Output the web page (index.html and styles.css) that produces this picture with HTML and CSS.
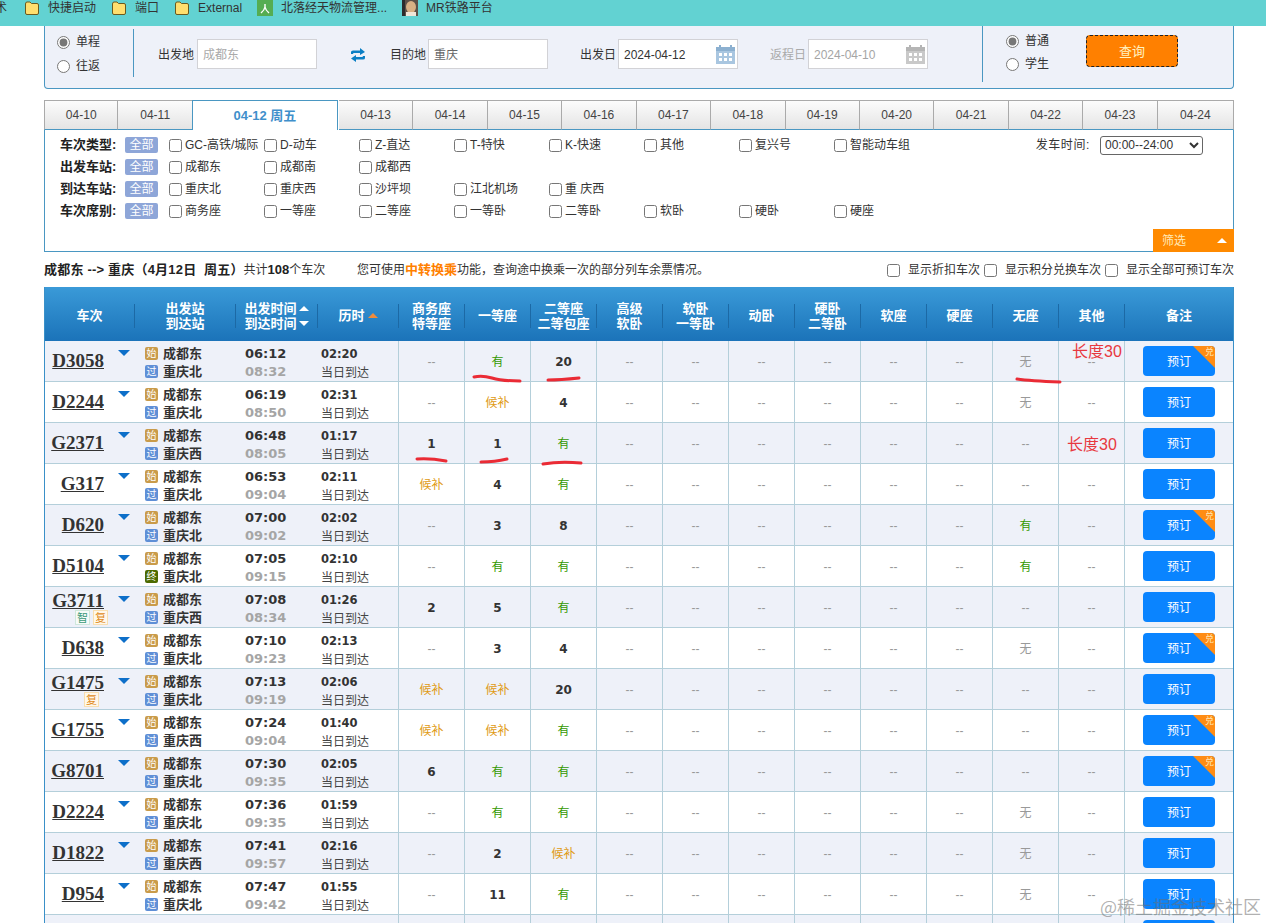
FILE: index.html
```html
<!DOCTYPE html>
<html lang="zh-CN">
<head>
<meta charset="utf-8">
<title>车票查询</title>
<link rel="stylesheet" href="styles.css">
</head>
<body>
<nav class="bookmarks">
  <span class="cut">术</span>
  <span class="bm"><svg class="ic" viewBox="0 0 16 16"><path d="M1.5 4 Q1.5 2 3 2 H6 L7.5 3.5 H13 Q14.5 3.5 14.5 5 V13 Q14.5 14.5 13 14.5 H3 Q1.5 14.5 1.5 13 Z" fill="#ffdf6e" stroke="#6b5a1e"/></svg>快捷启动</span>
  <span class="bm"><svg class="ic" viewBox="0 0 16 16"><path d="M1.5 4 Q1.5 2 3 2 H6 L7.5 3.5 H13 Q14.5 3.5 14.5 5 V13 Q14.5 14.5 13 14.5 H3 Q1.5 14.5 1.5 13 Z" fill="#ffdf6e" stroke="#6b5a1e"/></svg>端口</span>
  <span class="bm"><svg class="ic" viewBox="0 0 16 16"><path d="M1.5 4 Q1.5 2 3 2 H6 L7.5 3.5 H13 Q14.5 3.5 14.5 5 V13 Q14.5 14.5 13 14.5 H3 Q1.5 14.5 1.5 13 Z" fill="#ffdf6e" stroke="#6b5a1e"/></svg>External</span>
  <span class="bm"><svg class="ic" viewBox="0 0 16 16"><rect width="16" height="16" fill="#55ad52"/><path d="M8 4 V7 Q7.5 10 4 13 M8 7 Q8.5 10 12 13" fill="none" stroke="#fff" stroke-width="1.4"/></svg>北落经天物流管理...</span>
  <span class="bm"><svg class="ic" viewBox="0 0 16 16"><rect width="16" height="16" fill="#5d5148"/><ellipse cx="9" cy="7" rx="5" ry="6" fill="#d9b184"/><rect x="0" y="0" width="3" height="16" fill="#2c2c2c"/><rect x="4" y="12" width="10" height="4" fill="#f0e6d8"/></svg>MR铁路平台</span>
</nav>

<main class="page">
  <section class="query">
    <div class="trip">
      <label class="opt"><input type="radio" name="trip" checked>单程</label>
      <label class="opt"><input type="radio" name="trip">往返</label>
    </div>
    <div class="field first"><span>出发地</span><div class="box muted">成都东</div></div>
    <svg class="swap" viewBox="0 0 16 14"><path d="M1 6 V4 Q1 2.5 3 2.5 H10 V0 L15 4 L10 7 V5 H3.5 L3 6 Z M15 8 V10 Q15 11.5 13 11.5 H6 V14 L1 10.5 L6 7 V9 H12.5 L13 8 Z" fill="#0b7fc4"/></svg>
    <div class="field"><span>目的地</span><div class="box">重庆</div></div>
    <div class="field wide"><span>出发日</span><div class="box date">2024-04-12
      <svg class="cal" viewBox="0 0 21 21"><rect x="1" y="3" width="19" height="17" fill="#a9c6e0"/><rect x="1" y="3" width="19" height="4" fill="#8cb0d0"/><rect x="4" y="1" width="2" height="4" fill="#8cb0d0"/><rect x="15" y="1" width="2" height="4" fill="#8cb0d0"/><path d="M4 9 h3 v3 h-3 z M9 9 h3 v3 h-3 z M14 9 h3 v3 h-3 z M4 14 h3 v3 h-3 z M9 14 h3 v3 h-3 z M14 14 h3 v3 h-3 z" fill="#fff"/></svg></div></div>
    <div class="field wide off"><span>返程日</span><div class="box date muted2">2024-04-10
      <svg class="cal" viewBox="0 0 21 21"><rect x="1" y="3" width="19" height="17" fill="#c9c9c9"/><rect x="1" y="3" width="19" height="4" fill="#b5b5b5"/><rect x="4" y="1" width="2" height="4" fill="#b5b5b5"/><rect x="15" y="1" width="2" height="4" fill="#b5b5b5"/><path d="M4 9 h3 v3 h-3 z M9 9 h3 v3 h-3 z M14 9 h3 v3 h-3 z M4 14 h3 v3 h-3 z M9 14 h3 v3 h-3 z M14 14 h3 v3 h-3 z" fill="#fff"/></svg></div></div>
    <div class="vline"></div>
    <div class="kind">
      <label class="opt"><input type="radio" name="kind" checked>普通</label>
      <label class="opt"><input type="radio" name="kind">学生</label>
    </div>
    <button class="search" type="button">查询</button>
  </section>

  <div class="tabs">
    <span class="tab">04-10</span><span class="tab">04-11</span><span class="tab on">04-12 周五</span><span class="tab">04-13</span><span class="tab">04-14</span><span class="tab">04-15</span><span class="tab">04-16</span><span class="tab">04-17</span><span class="tab">04-18</span><span class="tab">04-19</span><span class="tab">04-20</span><span class="tab">04-21</span><span class="tab">04-22</span><span class="tab">04-23</span><span class="tab">04-24</span>
  </div>

  <section class="filter">
    <div class="frow">
      <b class="flabel">车次类型:</b><span class="all">全部</span>
      <div class="checks">
        <label><input type="checkbox">GC-高铁/城际</label><label><input type="checkbox">D-动车</label><label><input type="checkbox">Z-直达</label><label><input type="checkbox">T-特快</label><label><input type="checkbox">K-快速</label><label><input type="checkbox">其他</label><label><input type="checkbox">复兴号</label><label><input type="checkbox">智能动车组</label>
      </div>
      <div class="depart"><span>发车时间:</span><select class="sel"><option>00:00--24:00</option></select></div>
    </div>
    <div class="frow">
      <b class="flabel">出发车站:</b><span class="all">全部</span>
      <div class="checks"><label><input type="checkbox">成都东</label><label><input type="checkbox">成都南</label><label><input type="checkbox">成都西</label></div>
    </div>
    <div class="frow">
      <b class="flabel">到达车站:</b><span class="all">全部</span>
      <div class="checks"><label><input type="checkbox">重庆北</label><label><input type="checkbox">重庆西</label><label><input type="checkbox">沙坪坝</label><label><input type="checkbox">江北机场</label><label><input type="checkbox">重 庆西</label></div>
    </div>
    <div class="frow">
      <b class="flabel">车次席别:</b><span class="all">全部</span>
      <div class="checks"><label><input type="checkbox">商务座</label><label><input type="checkbox">一等座</label><label><input type="checkbox">二等座</label><label><input type="checkbox">一等卧</label><label><input type="checkbox">二等卧</label><label><input type="checkbox">软卧</label><label><input type="checkbox">硬卧</label><label><input type="checkbox">硬座</label></div>
    </div>
    <div class="fbtn"><span>筛选</span><i class="tri"></i></div>
  </section>

  <div class="summary">
    <div class="sleft"><b class="route">成都东 --&gt; 重庆（4月12日&nbsp; 周五）</b>共计<b>108</b>个车次</div>
    <div class="tip">您可使用<b class="tr">中转换乘</b>功能，查询途中换乘一次的部分列车余票情况。</div>
    <div class="sright">
      <label><input type="checkbox">显示折扣车次</label>
      <label><input type="checkbox">显示积分兑换车次</label>
      <label><input type="checkbox">显示全部可预订车次</label>
    </div>
  </div>

  <div class="tablewrap">
  <table class="trains">
    <colgroup><col class="c0"><col class="c1"><col class="c2"><col class="c3"><col class="cs"><col class="cs"><col class="cs"><col class="cs"><col class="cs"><col class="cs"><col class="cs"><col class="cs"><col class="cs"><col class="cs"><col class="cs"><col class="c9"></colgroup>
    <thead><tr>
      <th><div class="hc">车次</div></th>
      <th><div class="hc">出发站<br>到达站</div></th>
      <th><div class="hc"><div><div class="hl">出发时间<i class="up"></i></div><div class="hl">到达时间<i class="dn"></i></div></div></div></th>
      <th><div class="hc">历时<i class="up or"></i></div></th>
      <th><div class="hc">商务座<br>特等座</div></th>
      <th><div class="hc">一等座</div></th>
      <th><div class="hc">二等座<br>二等包座</div></th>
      <th><div class="hc">高级<br>软卧</div></th>
      <th><div class="hc">软卧<br>一等卧</div></th>
      <th><div class="hc">动卧</div></th>
      <th><div class="hc">硬卧<br>二等卧</div></th>
      <th><div class="hc">软座</div></th>
      <th><div class="hc">硬座</div></th>
      <th><div class="hc">无座</div></th>
      <th><div class="hc">其他</div></th>
      <th><div class="hc">备注</div></th>
    </tr></thead>
    <tbody>
      <tr><td class="t"><div class="tn"><div class="cd"><a>D3058</a></div><i class="ar"></i></div></td><td class="s"><div class="ln"><i class="st">始</i>成都东</div><div class="ln"><i class="gu">过</i>重庆北</div></td><td class="tm"><div>06:12</div><div class="ga">08:32</div></td><td class="du"><div>02:20</div><div class="dd">当日到达</div></td><td>--</td><td class="y">有</td><td class="n">20</td><td>--</td><td>--</td><td>--</td><td>--</td><td>--</td><td>--</td><td>无</td><td>--</td><td><a class="bk">预订<i class="dui">兑</i></a></td></tr>
      <tr><td class="t"><div class="tn"><div class="cd"><a>D2244</a></div><i class="ar"></i></div></td><td class="s"><div class="ln"><i class="st">始</i>成都东</div><div class="ln"><i class="gu">过</i>重庆北</div></td><td class="tm"><div>06:19</div><div class="ga">08:50</div></td><td class="du"><div>02:31</div><div class="dd">当日到达</div></td><td>--</td><td class="h">候补</td><td class="n">4</td><td>--</td><td>--</td><td>--</td><td>--</td><td>--</td><td>--</td><td>无</td><td>--</td><td><a class="bk">预订</a></td></tr>
      <tr><td class="t"><div class="tn"><div class="cd"><a>G2371</a></div><i class="ar"></i></div></td><td class="s"><div class="ln"><i class="st">始</i>成都东</div><div class="ln"><i class="gu">过</i>重庆西</div></td><td class="tm"><div>06:48</div><div class="ga">08:05</div></td><td class="du"><div>01:17</div><div class="dd">当日到达</div></td><td class="n">1</td><td class="n">1</td><td class="y">有</td><td>--</td><td>--</td><td>--</td><td>--</td><td>--</td><td>--</td><td>--</td><td>--</td><td><a class="bk">预订</a></td></tr>
      <tr><td class="t"><div class="tn"><div class="cd"><a>G317</a></div><i class="ar"></i></div></td><td class="s"><div class="ln"><i class="st">始</i>成都东</div><div class="ln"><i class="gu">过</i>重庆北</div></td><td class="tm"><div>06:53</div><div class="ga">09:04</div></td><td class="du"><div>02:11</div><div class="dd">当日到达</div></td><td class="h">候补</td><td class="n">4</td><td class="y">有</td><td>--</td><td>--</td><td>--</td><td>--</td><td>--</td><td>--</td><td>--</td><td>--</td><td><a class="bk">预订</a></td></tr>
      <tr><td class="t"><div class="tn"><div class="cd"><a>D620</a></div><i class="ar"></i></div></td><td class="s"><div class="ln"><i class="st">始</i>成都东</div><div class="ln"><i class="gu">过</i>重庆北</div></td><td class="tm"><div>07:00</div><div class="ga">09:02</div></td><td class="du"><div>02:02</div><div class="dd">当日到达</div></td><td>--</td><td class="n">3</td><td class="n">8</td><td>--</td><td>--</td><td>--</td><td>--</td><td>--</td><td>--</td><td class="y">有</td><td>--</td><td><a class="bk">预订<i class="dui">兑</i></a></td></tr>
      <tr><td class="t"><div class="tn"><div class="cd"><a>D5104</a></div><i class="ar"></i></div></td><td class="s"><div class="ln"><i class="st">始</i>成都东</div><div class="ln"><i class="zh">终</i>重庆北</div></td><td class="tm"><div>07:05</div><div class="ga">09:15</div></td><td class="du"><div>02:10</div><div class="dd">当日到达</div></td><td>--</td><td class="y">有</td><td class="y">有</td><td>--</td><td>--</td><td>--</td><td>--</td><td>--</td><td>--</td><td class="y">有</td><td>--</td><td><a class="bk">预订</a></td></tr>
      <tr><td class="t"><div class="tn"><div class="cd"><a>G3711</a><div class="marks"><i class="zhi">智</i><i class="fu">复</i></div></div><i class="ar"></i></div></td><td class="s"><div class="ln"><i class="st">始</i>成都东</div><div class="ln"><i class="gu">过</i>重庆西</div></td><td class="tm"><div>07:08</div><div class="ga">08:34</div></td><td class="du"><div>01:26</div><div class="dd">当日到达</div></td><td class="n">2</td><td class="n">5</td><td class="y">有</td><td>--</td><td>--</td><td>--</td><td>--</td><td>--</td><td>--</td><td>--</td><td>--</td><td><a class="bk">预订</a></td></tr>
      <tr><td class="t"><div class="tn"><div class="cd"><a>D638</a></div><i class="ar"></i></div></td><td class="s"><div class="ln"><i class="st">始</i>成都东</div><div class="ln"><i class="gu">过</i>重庆北</div></td><td class="tm"><div>07:10</div><div class="ga">09:23</div></td><td class="du"><div>02:13</div><div class="dd">当日到达</div></td><td>--</td><td class="n">3</td><td class="n">4</td><td>--</td><td>--</td><td>--</td><td>--</td><td>--</td><td>--</td><td>无</td><td>--</td><td><a class="bk">预订<i class="dui">兑</i></a></td></tr>
      <tr><td class="t"><div class="tn"><div class="cd"><a>G1475</a><div class="marks"><i class="fu">复</i></div></div><i class="ar"></i></div></td><td class="s"><div class="ln"><i class="st">始</i>成都东</div><div class="ln"><i class="gu">过</i>重庆北</div></td><td class="tm"><div>07:13</div><div class="ga">09:19</div></td><td class="du"><div>02:06</div><div class="dd">当日到达</div></td><td class="h">候补</td><td class="h">候补</td><td class="n">20</td><td>--</td><td>--</td><td>--</td><td>--</td><td>--</td><td>--</td><td>--</td><td>--</td><td><a class="bk">预订</a></td></tr>
      <tr><td class="t"><div class="tn"><div class="cd"><a>G1755</a></div><i class="ar"></i></div></td><td class="s"><div class="ln"><i class="st">始</i>成都东</div><div class="ln"><i class="gu">过</i>重庆西</div></td><td class="tm"><div>07:24</div><div class="ga">09:04</div></td><td class="du"><div>01:40</div><div class="dd">当日到达</div></td><td class="h">候补</td><td class="h">候补</td><td class="y">有</td><td>--</td><td>--</td><td>--</td><td>--</td><td>--</td><td>--</td><td>--</td><td>--</td><td><a class="bk">预订<i class="dui">兑</i></a></td></tr>
      <tr><td class="t"><div class="tn"><div class="cd"><a>G8701</a></div><i class="ar"></i></div></td><td class="s"><div class="ln"><i class="st">始</i>成都东</div><div class="ln"><i class="gu">过</i>重庆北</div></td><td class="tm"><div>07:30</div><div class="ga">09:35</div></td><td class="du"><div>02:05</div><div class="dd">当日到达</div></td><td class="n">6</td><td class="y">有</td><td class="y">有</td><td>--</td><td>--</td><td>--</td><td>--</td><td>--</td><td>--</td><td>--</td><td>--</td><td><a class="bk">预订<i class="dui">兑</i></a></td></tr>
      <tr><td class="t"><div class="tn"><div class="cd"><a>D2224</a></div><i class="ar"></i></div></td><td class="s"><div class="ln"><i class="st">始</i>成都东</div><div class="ln"><i class="gu">过</i>重庆北</div></td><td class="tm"><div>07:36</div><div class="ga">09:35</div></td><td class="du"><div>01:59</div><div class="dd">当日到达</div></td><td>--</td><td class="y">有</td><td class="y">有</td><td>--</td><td>--</td><td>--</td><td>--</td><td>--</td><td>--</td><td>无</td><td>--</td><td><a class="bk">预订</a></td></tr>
      <tr><td class="t"><div class="tn"><div class="cd"><a>D1822</a></div><i class="ar"></i></div></td><td class="s"><div class="ln"><i class="st">始</i>成都东</div><div class="ln"><i class="gu">过</i>重庆西</div></td><td class="tm"><div>07:41</div><div class="ga">09:57</div></td><td class="du"><div>02:16</div><div class="dd">当日到达</div></td><td>--</td><td class="n">2</td><td class="h">候补</td><td>--</td><td>--</td><td>--</td><td>--</td><td>--</td><td>--</td><td>无</td><td>--</td><td><a class="bk">预订</a></td></tr>
      <tr><td class="t"><div class="tn"><div class="cd"><a>D954</a></div><i class="ar"></i></div></td><td class="s"><div class="ln"><i class="st">始</i>成都东</div><div class="ln"><i class="gu">过</i>重庆北</div></td><td class="tm"><div>07:47</div><div class="ga">09:42</div></td><td class="du"><div>01:55</div><div class="dd">当日到达</div></td><td>--</td><td class="n">11</td><td class="y">有</td><td>--</td><td>--</td><td>--</td><td>--</td><td>--</td><td>--</td><td>无</td><td>--</td><td><a class="bk">预订</a></td></tr>
      <tr><td class="t"></td><td class="s"><div class="ln"><i class="st">始</i>成都东</div></td><td class="tm"><div>07:52</div></td><td class="du"><div>02:11</div></td><td></td><td></td><td></td><td></td><td></td><td></td><td></td><td></td><td></td><td></td><td></td><td><a class="bk"></a></td></tr>
    </tbody>
  </table>
  </div>
</main>

<svg class="marksvg" viewBox="0 0 1266 923" aria-hidden="true">
  <g fill="none" stroke="#ea2b35" stroke-width="3" stroke-linecap="round">
    <path d="M474 377 Q482 375 492 378 T520 381"/>
    <path d="M548 380 Q560 380 579 378"/>
    <path d="M1017 379 Q1030 381 1060 382"/>
    <path d="M417 459 Q430 458 446 461"/>
    <path d="M481 462 Q495 462 507 459"/>
    <path d="M543 464 Q560 461 581 463"/>
  </g>
</svg>
<span class="note n1">长度30</span>
<span class="note n2">长度30</span>
<span class="wm">@稀土掘金技术社区</span>
</body>
</html>
```
FILE: styles.css
```css
* { box-sizing: border-box; }
html, body { margin: 0; padding: 0; height: 923px; overflow: hidden; background: #fff; }
body { position: relative; font: 12px/16px "Liberation Sans", "Noto Sans CJK SC", sans-serif; color: #333; }
i { font-style: normal; }
input { margin: 0; width: 13px; height: 13px; accent-color: #777; flex: none; }

.bookmarks { height: 26px; background: #62d2d2; display: flex; gap: 15px; color: #333; white-space: nowrap; overflow: hidden; }
.cut { margin-left: -5px; margin-right: 2px; }
.bm { display: flex; gap: 8px; align-items: flex-start; }
.ic { width: 16px; height: 16px; flex: none; }

.page { width: 1190px; margin-left: 44px; }

.query { height: 63px; background: #eef1f9; border: 1px solid #4a97c2; border-top: 0; border-radius: 0 0 4px 4px; display: flex; align-items: flex-start; padding-left: 12px; }
.trip { width: 77px; height: 48px; margin-top: 3px; padding-top: 5px; border-right: 1px solid #4a97c2; display: flex; flex-direction: column; gap: 8px; }
.opt { display: flex; align-items: center; gap: 6px; height: 16px; }
.field { display: flex; align-items: center; gap: 2px; margin: 13px 0 0 24px; }
.field.first { gap: 3px; }
.field.wide { margin-left: 32px; }
.field.off span { color: #aaa; }
.field > span { width: 36px; padding-top: 2px; white-space: nowrap; }
.box { width: 120px; height: 30px; background: #fff; border: 1px solid #d2d2d6; padding: 2px 0 0 5px; line-height: 26px; color: #666; display: flex; align-items: center; justify-content: space-between; }
.muted { color: #aaa; }
.date { color: #333; padding-right: 1px; }
.date.muted2 { color: #a5a5a5; }
.cal { width: 21px; height: 21px; margin-top: -2px; }
.swap { width: 16px; height: 14px; margin: 22px 0 0 33px; }
.vline { width: 1px; height: 56px; background: #4a97c2; margin-left: 54px; }
.kind { width: 81px; margin: 7px 0 0 23px; display: flex; flex-direction: column; gap: 7px; }
.search { width: 92px; height: 32px; margin: 9px 0 0 -1px; background: #ff8000; color: #fff2c0; font: inherit; font-size: 13px; border: 1px dashed #222; border-radius: 4px; padding: 1px 0 0; }

.tabs { display: flex; margin-top: 11px; height: 30px; }
.tab { flex: 0 0 74.45px; display: flex; align-items: center; justify-content: center; border: 1px solid #aaa; border-left: 0; border-bottom: 1px solid #4a97c2; background: linear-gradient(#fcfcfc, #e4e4e4); color: #444; }
.tab:first-child { border-left: 1px solid #aaa; }
.tab:last-child { flex: 1; }
.tab.on { flex: 0 0 146px; margin-left: -1px; margin-right: 1px; background: #fff; color: #3f8fcb; font-weight: bold; font-size: 13px; border: 1px solid #4a97c2; border-bottom: 0; }

.filter { height: 122px; border: 1px solid #4a97c2; border-top: 0; display: flex; flex-direction: column; padding-top: 4px; }
.frow { display: flex; align-items: center; height: 22px; padding-left: 15px; }
.flabel { width: 65px; font-size: 13px; color: #222; white-space: nowrap; }
.all { width: 33px; height: 16px; background: #8ea6d8; color: #fff; text-align: center; line-height: 16px; border-radius: 2px; margin-right: 11px; }
.checks { display: flex; }
.checks label { width: 95px; display: flex; align-items: center; gap: 3px; white-space: nowrap; }
.depart { margin-left: auto; margin-right: 30px; display: flex; align-items: center; gap: 10px; }
.depart span { white-space: nowrap; letter-spacing: .6px; }
.sel { width: 103px; height: 19px; font: 12px "Liberation Sans", sans-serif; padding: 0; background: #fff; border: 1px solid #666; border-radius: 3px; color: #333; }
.fbtn { margin: auto -1px -1px 0; align-self: flex-end; width: 81px; height: 23px; background: #ff8a00; color: #ffe9b8; display: flex; align-items: center; justify-content: space-between; padding: 0 7px 0 9px; }
.tri { width: 0; height: 0; border: 5px solid transparent; border-top: 0; border-bottom: 5px solid #fff; }

.summary { height: 35px; padding-top: 1px; display: flex; align-items: center; white-space: nowrap; }
.summary b { font-size: 13px; color: #222; }
.summary b.route { letter-spacing: .2px; }
.sleft { width: 313px; }
.summary b.tr { color: #ff8000; }
.sright { margin-left: auto; display: flex; gap: 4px; }
.sright label { display: flex; align-items: center; gap: 8px; }

.tablewrap { border: 1px solid #3a90c8; border-width: 0 1px; }
.trains { width: 1188px; table-layout: fixed; border-collapse: separate; border-spacing: 0; text-align: center; }
.c0 { width: 89px; } .c1 { width: 101px; } .c2 { width: 82px; } .c3 { width: 81px; } .cs { width: 66px; } .c9 { width: 109px; }
.trains thead tr { height: 54px; }
.trains th { padding: 3px 0 0; color: #fff; font-size: 13px; line-height: 15px; font-weight: bold; background: linear-gradient(#3a9ad8, #1b73b9); }
.hc { height: 24px; display: flex; align-items: center; justify-content: center; border-left: 1px solid #1c69a5; gap: 2px; white-space: nowrap; }
.trains th:first-child .hc { border-left: 0; }
.hl { display: flex; align-items: center; gap: 2px; }
.up, .dn { width: 0; height: 0; border: 5px solid transparent; }
.up { border-top: 0; border-bottom: 5px solid #fff; }
.dn { border-bottom: 0; border-top: 5px solid #fff; }
.up.or { border-bottom-color: #f08c3c; margin-left: 1px; }

.trains tbody tr { height: 41px; }
.trains tbody tr:nth-child(odd) { background: #eef1f9; }
.trains td { padding: 0; border-bottom: 1px solid #b4cfda; color: #999; overflow: visible; }
.trains td:nth-child(n+5) { border-left: 1px solid #b4cfda; }
.trains td:nth-child(n+5):not(:last-child) { padding-top: 2px; }
.trains td.n { font: bold 12px "DejaVu Sans", sans-serif; color: #333; }
.trains td.y { color: #339900; }
.trains td.h { color: #e09a12; }
.tn { display: flex; height: 40px; }
.cd { width: 59px; text-align: right; font: bold 19px/22px "Liberation Serif", serif; color: #333; align-self: center; white-space: nowrap; }
.cd a { text-decoration: underline; }
.ar { width: 0; height: 0; border: 6px solid transparent; border-top: 6px solid #0d6fc9; border-bottom: 0; margin: 9px 0 0 14px; }
.marks { display: flex; justify-content: center; gap: 3px; width: 33px; margin: -2px 0 0 30px; font: 11px/13px "Noto Sans CJK SC", sans-serif; }
.marks i { width: 15px; height: 15px; text-align: center; }
.zhi { color: #3a9a78; background: #f6fbf8; border: 1px solid #cfe8dc; }
.fu { color: #e08a1a; background: #fff8ea; border: 1px solid #f9dfb0; }

.trains td.s, .trains td.tm, .trains td.du { text-align: left; padding-top: 3px; }
.trains td.s { padding-left: 11px; font-weight: bold; font-size: 13px; }
.ln { display: flex; align-items: center; gap: 5px; height: 18px; color: #333; }
.ln i { width: 13px; height: 13px; font-size: 10px; line-height: 13px; text-align: center; color: #fff; font-weight: normal; border-radius: 2px; flex: none; }
.st { background: #c99b4a; }
.gu { background: #5f8fd6; }
.ln .zh { background: #4c6a00; }
.trains td.tm { padding-left: 10px; font: bold 13px/18px "DejaVu Sans", sans-serif; color: #333; }
.ga { color: #a5a5a5; }
.trains td.du { padding-left: 4px; font: bold 11.5px/18px "DejaVu Sans", sans-serif; color: #333; }
.dd { font: 12px/18px "Noto Sans CJK SC", sans-serif; color: #444; }
.bk { position: relative; display: block; width: 72px; height: 30px; margin: 0 auto; background: #0a84ff; color: #fff; line-height: 33px; border-radius: 4px; overflow: hidden; }
.dui { position: absolute; top: 0; right: 0; width: 22px; height: 22px; background: #ff8c14; clip-path: polygon(0 0, 100% 0, 100% 100%); color: #ffe9b8; font-size: 9px; line-height: 13px; text-align: right; padding-right: 1px; }

.marksvg { position: absolute; left: 0; top: 0; width: 1266px; height: 923px; pointer-events: none; }
.note { position: absolute; color: #e8383f; font-size: 16px; line-height: 20px; white-space: nowrap; }
.n1 { left: 1072px; top: 342px; }
.n2 { left: 1067px; top: 435px; }
.wm { position: absolute; left: 1100px; top: 896px; color: rgba(110, 110, 110, .55); font: 18px/20px "Noto Sans CJK SC", sans-serif; white-space: nowrap; }
```
